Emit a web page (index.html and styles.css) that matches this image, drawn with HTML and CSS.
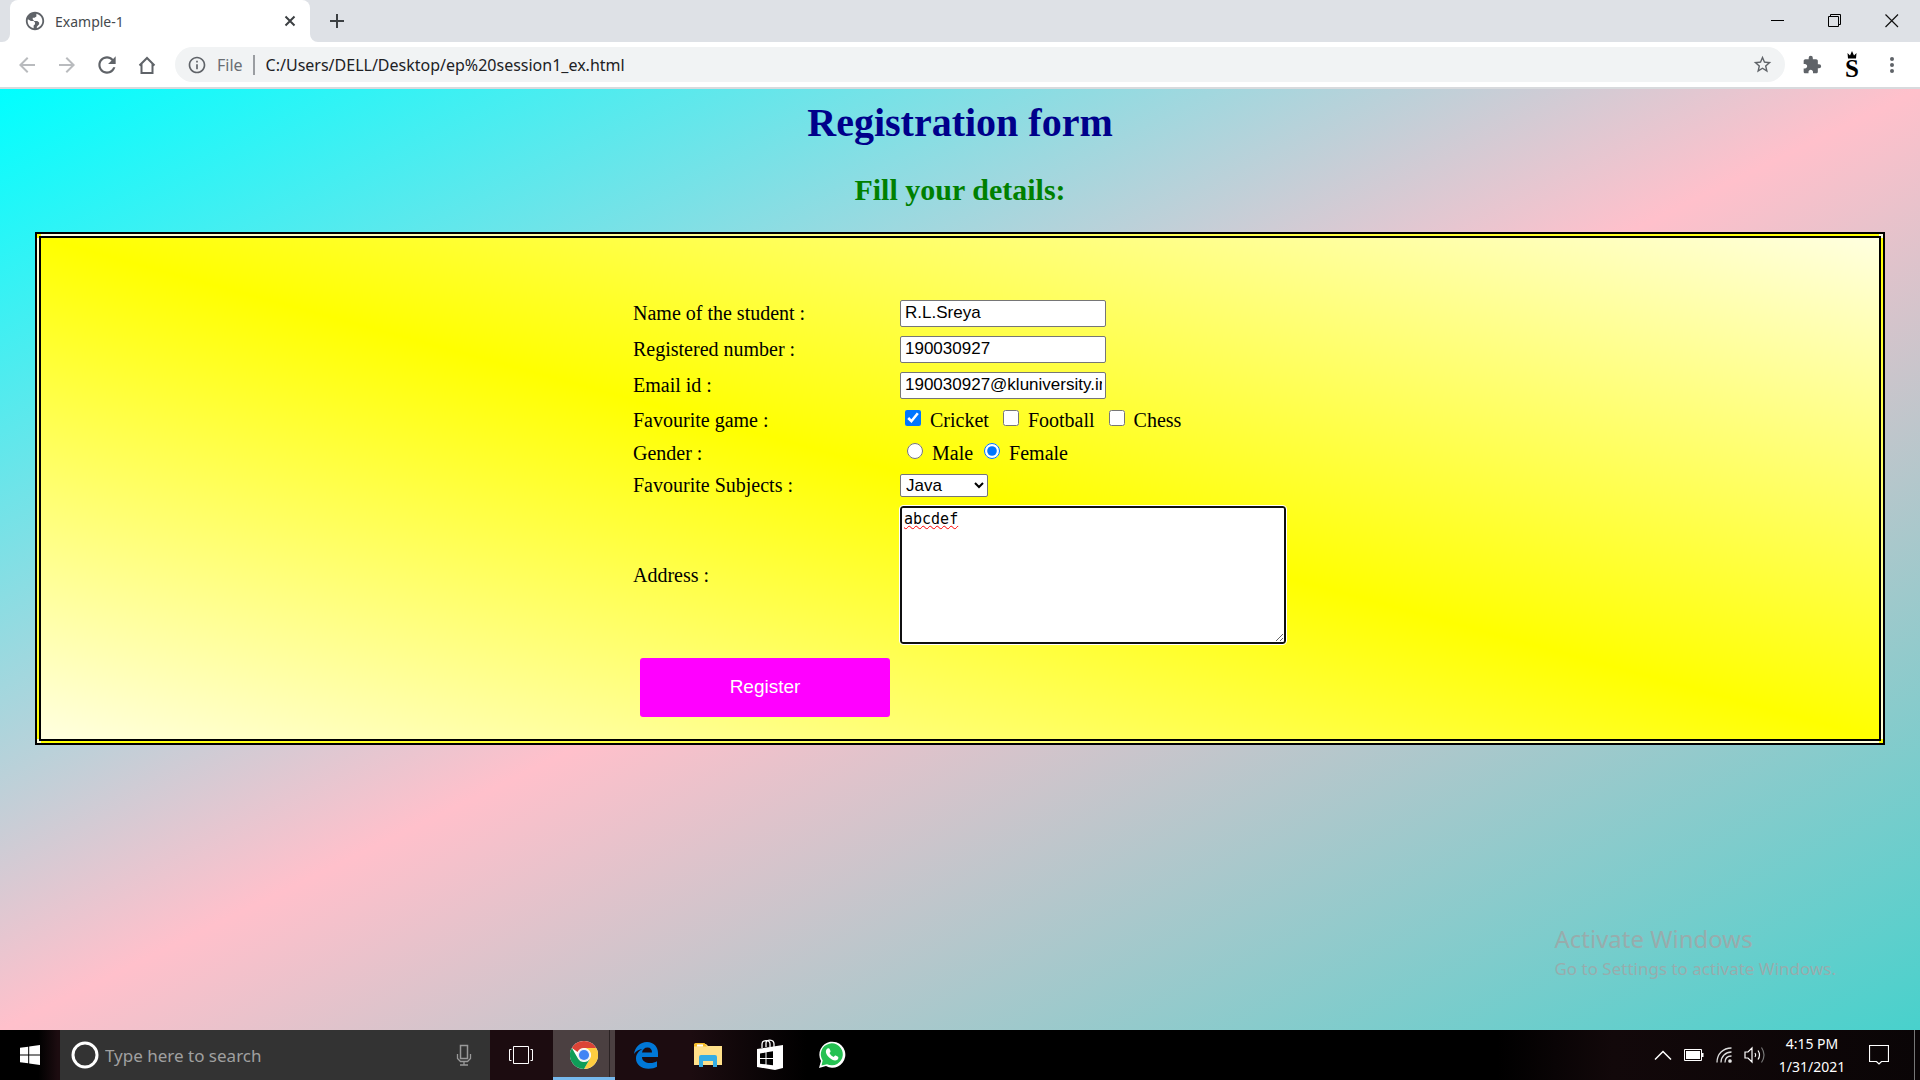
FILE: index.html
```html
<!DOCTYPE html>
<html lang="en">
<head>
<meta charset="utf-8">
<title>Example-1</title>
<link rel="stylesheet" href="styles.css">
</head>
<body>
<header class="browser">
  <div class="tabstrip">
    <div class="tab">
      <svg class="tab-foot left" width="8" height="8" viewBox="0 0 8 8"><path d="M8 0v8H0a8 8 0 0 0 8-8z" fill="#fff"/></svg>
      <svg width="22" height="22" viewBox="0 0 24 24"><path fill="#5f6368" d="M12 2C6.480 2 2 6.480 2 12s4.480 10 10 10 10-4.480 10-10S17.520 2 12 2zM4 12c0-.6.1-1.200.3-1.800L7.500 12h3l1.500 1.500v2L10.500 17v2.800C6.800 19.200 4 16 4 12zm10 7.700v-1.500l2.500-2.700v-2L14.500 12H11l-1.500-2V8.500h2L13.500 7V4.200c3.700.8 6.500 4 6.500 7.800 0 3.700-2.500 6.800-6 7.700z"/></svg>
      <span class="tab-title">Example-1</span>
      <button class="icon-btn tab-close" aria-label="Close tab"><svg width="12" height="12" viewBox="0 0 12 12"><path d="M1.500 1.500l9 9M10.500 1.500l-9 9" stroke="#3c4043" stroke-width="2"/></svg></button>
      <svg class="tab-foot right" width="8" height="8" viewBox="0 0 8 8"><path d="M0 0v8h8a8 8 0 0 1-8-8z" fill="#fff"/></svg>
    </div>
    <button class="icon-btn new-tab" aria-label="New tab"><svg width="16" height="16" viewBox="0 0 16 16"><path d="M8 1v14M1 8h14" stroke="#3c4043" stroke-width="2"/></svg></button>
    <div class="window-controls">
      <button class="icon-btn" aria-label="Minimize"><svg width="14" height="14" viewBox="0 0 14 14"><path d="M0 6.500h13" stroke="#000"/></svg></button>
      <button class="icon-btn" aria-label="Restore"><svg width="14" height="14" viewBox="0 0 14 14"><path d="M.5 2.500h10v10H.5zM2.500 2.500V.5h10v10h-2" fill="none" stroke="#000"/></svg></button>
      <button class="icon-btn" aria-label="Close"><svg width="14" height="14" viewBox="0 0 14 14"><path d="M.5.500l12.500 12.500M13 .5L.5 13" stroke="#111" stroke-width="1.200"/></svg></button>
    </div>
  </div>
  <div class="toolbar">
    <div class="nav">
      <button class="icon-btn" aria-label="Back"><svg width="24" height="24" viewBox="0 0 24 24"><path fill="#b9bbbe" d="M20 11H7.830l5.590-5.590L12 4l-8 8 8 8 1.410-1.410L7.830 13H20v-2z"/></svg></button>
      <button class="icon-btn" aria-label="Forward"><svg width="24" height="24" viewBox="0 0 24 24"><path fill="#b9bbbe" d="M12 4l-1.410 1.410L16.170 11H4v2h12.170l-5.580 5.590L12 20l8-8z"/></svg></button>
      <button class="icon-btn" aria-label="Reload"><svg width="26" height="26" viewBox="0 0 24 24"><path fill="#5f6368" d="M17.650 6.350C16.200 4.900 14.210 4 12 4c-4.420 0-7.990 3.580-7.990 8s3.570 8 7.990 8c3.730 0 6.840-2.550 7.730-6h-2.080c-.82 2.330-3.040 4-5.650 4-3.310 0-6-2.690-6-6s2.690-6 6-6c1.660 0 3.140.69 4.220 1.780L13 11h7V4l-2.350 2.350z"/></svg></button>
      <button class="icon-btn" aria-label="Home"><svg width="24" height="24" viewBox="0 0 24 24"><path d="M4.500 12.500L12 5l7.500 7.500M6.500 11v9h11v-9" fill="none" stroke="#5f6368" stroke-width="2"/></svg></button>
    </div>
    <div class="omnibox">
      <svg width="20" height="20" viewBox="0 0 24 24"><path fill="#5f6368" d="M11 7h2v2h-2zm0 4h2v6h-2zm1-9C6.480 2 2 6.480 2 12s4.480 10 10 10 10-4.480 10-10S17.520 2 12 2zm0 18c-4.410 0-8-3.590-8-8s3.590-8 8-8 8 3.590 8 8-3.590 8-8 8z"/></svg>
      <span class="scheme">File</span>
      <input class="url" type="text" aria-label="Address" value="C:/Users/DELL/Desktop/ep%20session1_ex.html">
      <button class="icon-btn star" aria-label="Bookmark"><svg width="21" height="21" viewBox="0 0 24 24"><path fill="#5f6368" d="M22 9.240l-7.190-.62L12 2 9.190 8.630 2 9.240l5.460 4.730L5.820 21 12 17.270 18.180 21l-1.630-7.030L22 9.240zM12 15.400l-3.760 2.270 1-4.280-3.320-2.880 4.380-.38L12 6.100l1.710 4.040 4.380.38-3.320 2.880 1 4.280L12 15.400z"/></svg></button>
    </div>
    <div class="extensions">
      <button class="icon-btn" aria-label="Extensions"><svg width="20" height="20" viewBox="0 0 24 24"><path fill="#5f6368" d="M20.500 11H19V7c0-1.100-.9-2-2-2h-4V3.500a2.500 2.500 0 0 0-5 0V5H4c-1.100 0-1.990.9-1.990 2v3.800H3.500c1.490 0 2.700 1.210 2.700 2.700s-1.210 2.700-2.700 2.700H2V20c0 1.100.9 2 2 2h3.800v-1.500c0-1.490 1.210-2.700 2.700-2.700s2.700 1.210 2.700 2.700V22H17c1.100 0 2-.9 2-2v-4h1.500a2.500 2.500 0 0 0 0-5z"/></svg></button>
      <button class="icon-btn profile" aria-label="Profile"><svg width="10" height="8" viewBox="0 0 10 8"><path d="M1 7.500L.5 2 3 4.500 5 0l2 4.500L9.500 2 9 7.500z"/></svg><span>S</span></button>
      <button class="icon-btn" aria-label="Menu"><svg width="4" height="18" viewBox="0 0 4 18" fill="#5f6368"><circle cx="2" cy="3" r="2"/><circle cx="2" cy="9" r="2"/><circle cx="2" cy="15" r="2"/></svg></button>
    </div>
  </div>
</header>

<main class="page">
  <h1>Registration form</h1>
  <h2>Fill your details:</h2>
  <form class="card">
    <table class="fields">
      <tr class="row-text"><td class="name"><label for="student">Name of the student :</label></td><td><input class="text" id="student" type="text" value="R.L.Sreya"></td></tr>
      <tr class="row-text"><td><label for="number">Registered number :</label></td><td><input class="text" id="number" type="text" value="190030927"></td></tr>
      <tr class="row-text"><td><label for="email">Email id :</label></td><td><input class="text" id="email" type="text" value="190030927@kluniversity.in"></td></tr>
      <tr class="row-choice"><td>Favourite game :</td><td>
        <div class="choices games">
          <label><input type="checkbox" checked>Cricket</label>
          <label><input type="checkbox">Football</label>
          <label><input type="checkbox">Chess</label>
        </div></td></tr>
      <tr class="row-choice"><td>Gender :</td><td>
        <div class="choices gender">
          <label><input type="radio" name="gender">Male</label>
          <label><input type="radio" name="gender" checked>Female</label>
        </div></td></tr>
      <tr class="row-select"><td><label for="subject">Favourite Subjects :</label></td><td><select id="subject"><option>Java</option><option>Python</option></select></td></tr>
      <tr class="row-area"><td><label for="address">Address :</label></td><td><textarea id="address" spellcheck="false">abcdef</textarea></td></tr>
      <tr class="row-submit"><td colspan="2"><button class="register" type="button">Register</button></td></tr>
    </table>
  </form>
  <div class="watermark"><p class="big">Activate Windows</p><p class="small">Go to Settings to activate Windows.</p></div>
</main>

<footer class="taskbar">
  <button class="icon-btn start" aria-label="Start"><svg width="20" height="20" viewBox="0 0 20 20" fill="#fff"><path d="M0 2.800L8.200 1.700v7.800H0zM9.200 1.500L20 0v9.500H9.200zM0 10.500h8.200v7.800L0 17.200zM9.200 10.500H20V20L9.200 18.500z"/></svg></button>
  <div class="search">
    <svg width="28" height="28" viewBox="0 0 28 28"><circle cx="14" cy="14" r="12" fill="none" stroke="#fff" stroke-width="3"/></svg>
    <input type="text" placeholder="Type here to search" aria-label="Search">
    <svg width="16" height="22" viewBox="0 0 16 22" fill="none" stroke="#999"><path d="M4.500 1.500h7v13h-7z" stroke-width="1.500"/><path d="M1.500 10v4.500l3 3h7l3-3V10M8 18v3M4 21h8" stroke-width="1.300"/></svg>
  </div>
  <button class="icon-btn task" aria-label="Task view"><svg width="26" height="20" viewBox="0 0 26 20" fill="none" stroke="#fff"><path d="M5.500 1.500h15v17h-15zM3.500 4.500h-2v11h2M22.500 4.500h2v11h-2"/></svg></button>
  <button class="icon-btn task active" aria-label="Chrome"><svg width="28" height="28" viewBox="0 0 48 48"><circle cx="24" cy="24" r="24" fill="#fff"/><path d="M24 0a24 24 0 0 1 20.800 12H24a12 12 0 0 0-11 7L3.200 12A24 24 0 0 1 24 0z" fill="#db4437"/><path d="M44.800 12A24 24 0 0 1 24 48l10.400-18A12 12 0 0 0 24 12z" fill="#ffcd40"/><path d="M3.200 12l10.400 18A12 12 0 0 0 34.400 30L24 48A24 24 0 0 1 3.200 12z" fill="#0f9d58"/><circle cx="24" cy="24" r="11" fill="#f1f1f1"/><circle cx="24" cy="24" r="8.700" fill="#4285f4"/></svg></button>
  <button class="icon-btn task" aria-label="Edge"><svg width="26" height="27" viewBox="0 0 26 27"><path fill="#0078d7" d="M1 12C2 5 7 0 14 0c7 0 11 5 11 11v4H9c0 4 4 6 8 6 3 0 5-.7 7-1.800v5.500c-2 1.300-5 2-8.500 2C8 26.700 3 22.500 3 16.500 3 12 6 8.500 9.500 7 6 7.200 3 9 1 12zM9 10.500h10C19 7.500 17.500 5.500 14.500 5.500S9.500 7.500 9 10.500z"/></svg></button>
  <button class="icon-btn task" aria-label="File Explorer"><svg width="28" height="24" viewBox="0 0 28 24"><path d="M0 1h12l2 2h14v19H0z" fill="#ffe08a"/><path d="M0 1.500Q0 0 1.500 0h9L13 3.500H0z" fill="#f7bd28"/><path d="M3 1.500h6v2H3z" fill="#fff"/><path d="M5 24V14q0-2 2-2h14q2 0 2 2v10h-4v-6H9v6z" fill="#34ade4"/></svg></button>
  <button class="icon-btn task" aria-label="Store"><svg width="28" height="32" viewBox="0 0 28 32"><path d="M6 9V5c0-4 8-5 8 0v3M10 8V4c0-4 8-4 8 1v3" fill="none" stroke="#fff" stroke-width="1.300"/><path d="M1 10l26-4v23l-8 2L1 28z" fill="#fff"/><path d="M4 14.500l5.500-1v5.500H4zM10.500 13.300l6.500-1V19h-6.500zM4 20h5.500v5.300L4 24.700zM10.500 20H17v6.200l-6.500-.8z" fill="#000"/></svg></button>
  <button class="icon-btn task" aria-label="WhatsApp"><svg width="28" height="28" viewBox="0 0 28 28"><path d="M1 27l2-7A13 13 0 1 1 8 25z" fill="#fff"/><path d="M3.500 24.500l1.200-5A11 11 0 1 1 9 23.200z" fill="#25c152"/><path d="M9.500 7.500c1-.6 1.600-.4 2 .3l1 2.200c.2.600-.2 1.100-1 2 1 2 2.300 3.200 4.300 4 .9-1.200 1.200-1.700 1.900-1.400l2.300 1.100c.6.400.6 2-.6 3-2 1.500-5 .8-8.200-2.200-3.600-3.500-4.400-7-1.700-9z" fill="#fff"/></svg></button>
  <div class="tray">
    <svg width="18" height="10" viewBox="0 0 18 10"><path d="M1 9.500L9 1.500l8 8" fill="none" stroke="#fff" stroke-width="1.500"/></svg>
    <svg width="20" height="12" viewBox="0 0 20 12"><path d="M.5.500h17v11H.5z" fill="none" stroke="#fff"/><path d="M2 2h14v8H2zM18 4h1.500v4H18z" fill="#fff"/></svg>
    <svg width="16" height="16" viewBox="0 0 16 16" fill="none" stroke="#ddd" stroke-width="1.300"><path d="M1 15.500C1 7 7 1 15.500 1M5 15.500C5 9.500 9.500 5 15.500 5M9 15.500C9 11.500 11.500 9 15.500 9"/><circle cx="14" cy="14" r="1.200" fill="#fff"/></svg>
    <svg width="22" height="18" viewBox="0 0 22 18" fill="none" stroke="#fff" stroke-width="1.200"><path d="M1 6h3l4-4v14l-4-4H1zM11 7q1.500 2 0 4M14 4.500q3 4.500 0 9"/><path d="M17.500 1.500q5 7.500 0 15" stroke="#777"/></svg>
    <div class="clock"><time>4:15 PM</time><time>1/31/2021</time></div>
    <svg width="20" height="20" viewBox="0 0 20 20"><path d="M.5.500h19v16h-7L10 19l-2.500-2.500h-7z" fill="none" stroke="#fff" stroke-width="1.200"/></svg>
  </div>
</footer>
</body>
</html>
```
FILE: styles.css
```css
* { box-sizing: border-box; }

body {
  margin: 0;
  min-height: 100vh;
  display: flex;
  flex-direction: column;
  font-family: "Liberation Serif", serif;
  font-size: 20px;
  color: #000;
}

svg { display: block; flex: none; }

.icon-btn {
  display: flex;
  align-items: center;
  justify-content: center;
  padding: 0;
  border: 0;
  background: none;
}

/* Browser frame */
.browser {
  font-family: "Noto Sans", sans-serif;
  background: #fff;
  border-bottom: 2px solid #d8dadd;
}

.tabstrip {
  display: flex;
  align-items: center;
  height: 42px;
  padding-left: 10px;
  background: #dee1e6;
}

.tab {
  position: relative;
  display: flex;
  align-items: center;
  width: 300px;
  height: 42px;
  padding: 0 14px;
  background: #fff;
  border-radius: 8px 8px 0 0;
}

.tab-foot { position: absolute; bottom: 0; }
.tab-foot.left { left: -8px; }
.tab-foot.right { right: -8px; }

.tab-title {
  flex: 1;
  padding-left: 9px;
  font-size: 14px;
  color: #45494d;
}

.new-tab { width: 54px; height: 42px; }

.window-controls { display: flex; margin-left: auto; }
.window-controls .icon-btn { width: 57px; height: 36px; }

.toolbar {
  display: flex;
  align-items: center;
  height: 45px;
  padding-left: 7px;
}

.nav { display: flex; width: 168px; }
.nav .icon-btn { width: 40px; height: 36px; }

.omnibox {
  flex: 1;
  display: flex;
  align-items: center;
  height: 35px;
  padding: 0 12px;
  border-radius: 18px;
  background: #f1f3f4;
}

.scheme {
  padding: 0 10px;
  border-right: 2px solid #9a9da1;
  font-size: 16px;
  line-height: 20px;
  color: #6a6e73;
}

.url {
  flex: 1;
  padding: 0 0 0 11px;
  border: 0;
  background: none;
  font: 16px "Noto Sans", sans-serif;
  color: #202124;
}

.extensions { display: flex; width: 135px; padding-left: 7px; }
.extensions .icon-btn { width: 40px; height: 40px; }

.profile { flex-direction: column; color: #000; }
.profile span { font: bold 25px/20px "Liberation Serif", serif; }

/* Page */
.page {
  position: relative;
  flex: 1;
  padding: 11px 35px;
  background: linear-gradient(to bottom right, cyan, pink, mediumturquoise);
}

h1 {
  margin: 0 0 27px;
  font-size: 40px;
  line-height: 46px;
  text-align: center;
  color: darkblue;
}

h2 {
  margin: 0 0 25px;
  font-size: 30px;
  line-height: 34px;
  text-align: center;
  color: green;
}

.card {
  padding: 57px 0 13px;
  border: 6px double #000;
  background: linear-gradient(to top right, lightyellow, yellow, lightyellow);
}

.fields {
  width: 654px;
  margin: 0 auto;
  border-collapse: collapse;
}

.fields td { padding: 0; line-height: 24px; }
.name { width: 267px; }
.row-text { height: 36px; }
.row-choice { height: 33px; }
.row-select { height: 32px; }
.row-area { height: 147px; }
.row-submit { height: 78px; }

.text {
  display: block;
  width: 206px;
  height: 27px;
  padding: 0 3px 1px 4px;
  border: 1px solid #767676;
  border-radius: 2px;
  background: #fff;
  font: 17px "Liberation Sans", sans-serif;
}

.choices { display: flex; }
.choices label { display: flex; align-items: center; }
.choices input { width: 16px; height: 16px; margin: 0 9px 4px 0; }
.games { gap: 14px; padding: 1px 0 0 5px; }
.gender { gap: 11px; padding: 1px 0 0 7px; }

select {
  display: block;
  width: 88px;
  height: 23px;
  padding: 0 0 0 1px;
  border: 1px solid #767676;
  border-radius: 2px;
  background: #fff;
  font: 17px "Liberation Sans", sans-serif;
}

textarea {
  display: block;
  width: 386px;
  height: 138px;
  padding: 1px 2px;
  border: 2px solid #101010;
  border-radius: 3px;
  outline: 1px solid #fff;
  font: 15px/20px "DejaVu Sans Mono", monospace;
  text-decoration: underline wavy red 1px;
}

.register {
  display: block;
  width: 250px;
  height: 59px;
  margin-left: 7px;
  border: 0;
  border-radius: 3px;
  background: magenta;
  color: #fff;
  font: 19px "Liberation Sans", sans-serif;
}

.watermark {
  position: absolute;
  right: 84px;
  bottom: 48px;
  font-family: "Noto Sans", sans-serif;
  color: #98acac;
}

.watermark p { margin: 0; }
.big { font-size: 24px; line-height: 34px; }
.small { font-size: 17px; line-height: 26px; }

/* Taskbar */
.taskbar {
  display: flex;
  height: 50px;
  background: linear-gradient(90deg, #000 0 2%, #1c0c10 3% 36%, #000 42% 78%, #12080a 84%, #0a0506);
  font-family: "Noto Sans", sans-serif;
}

.start { width: 60px; }

.search {
  display: flex;
  align-items: center;
  width: 430px;
  padding: 0 18px 0 11px;
  background: #333;
}

.search input {
  flex: 1;
  min-width: 0;
  padding: 0 0 0 6px;
  border: 0;
  background: none;
  font: 17px "Noto Sans", sans-serif;
}

.search input::placeholder { color: #a0a0a0; }

.task { width: 62px; }
.task.active {
  margin-left: 1px;
  padding-top: 3px;
  border-bottom: 3px solid #76b9ed;
  background: linear-gradient(90deg, #4b4041 56px, #2a2223 56px 57px, #4b4041 57px);
}

.tray {
  display: flex;
  align-items: center;
  gap: 12px;
  margin-left: auto;
  margin-right: 5px;
  padding-right: 25px;
  border-right: 1px solid #777;
  color: #fff;
}

.clock {
  display: flex;
  flex-direction: column;
  align-items: center;
  width: 68px;
  margin-right: 11px;
  font-size: 14px;
  line-height: 23px;
}
```
